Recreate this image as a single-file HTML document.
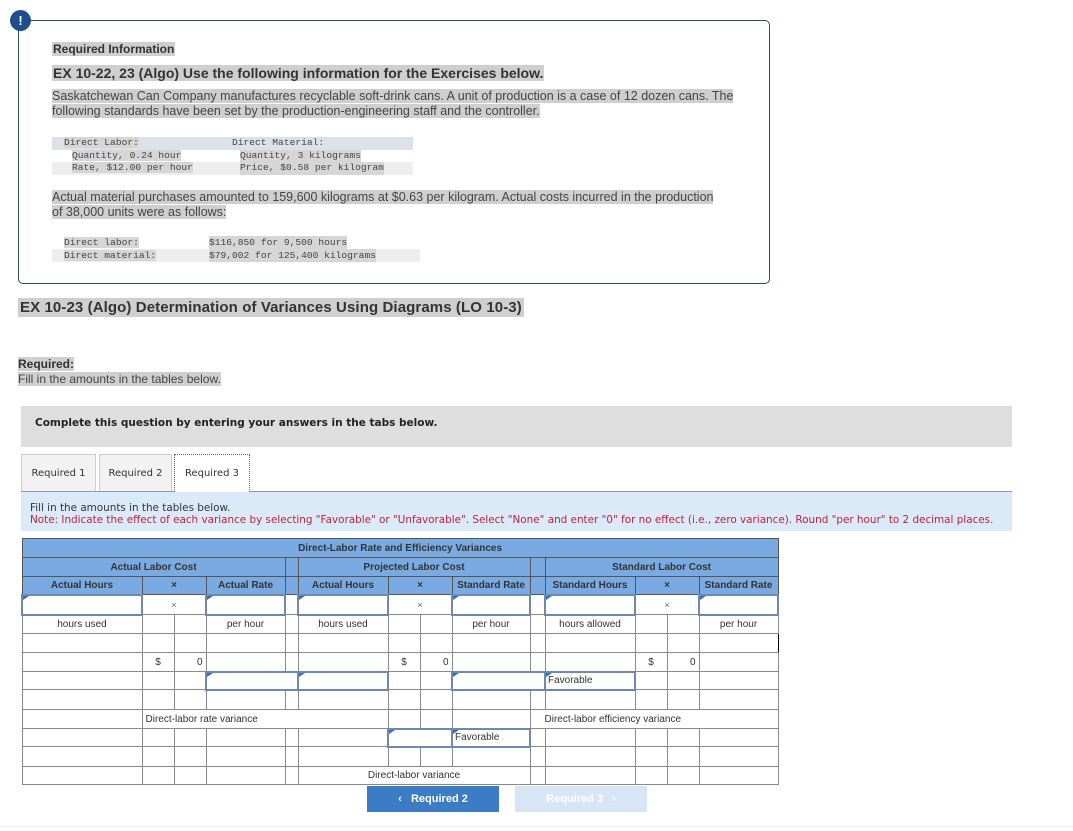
<!DOCTYPE html>
<html><head><meta charset="utf-8"><style>
*{margin:0;padding:0;box-sizing:border-box}
body{width:1073px;height:831px;background:#fff;font-family:"Liberation Sans",Arial,sans-serif;color:#333;position:relative;overflow:hidden}
.a{position:absolute;white-space:nowrap}
.hl{background:#cfcfcf}
.mono{font-family:"Liberation Mono","DejaVu Sans Mono",monospace;font-size:9.6px;color:#444}
.mono span{background:#d6d6d6}
.v{font-family:"DejaVu Sans",Verdana,sans-serif}
table{position:absolute;left:21px;top:538px;border-collapse:collapse;table-layout:fixed;width:756px;font-size:10px;color:#333}
td{border:1px solid #8a8a8a;padding:0 3px;text-align:center;overflow:hidden;white-space:nowrap}
tr.h td{background:#7aaae2;font-weight:bold;color:#333;border-color:#555}
td.in{position:relative;border:2px solid #6d89ad;background:#fff;text-align:left;padding-left:2px}
td.in:before{content:"";position:absolute;left:0;top:0;border-left:6px solid #3b6fb5;border-bottom:4px solid transparent}
td.l{text-align:left}
td.r{text-align:right}
.x{font-size:9px;color:#666}
</style></head><body>
<div class="a" style="left:10px;top:10px;width:21px;height:21px;border-radius:50%;background:#1f4e8c;color:#fff;font-weight:bold;font-size:13px;text-align:center;line-height:21px;z-index:3">!</div>
<div class="a" style="left:18px;top:20px;width:752px;height:264px;border:1px solid #2d4a6b;border-radius:5px"></div>
<div class="a hl" style="left:52px;top:42px;font-size:12px;font-weight:bold;padding:0 1px">Required Information</div>
<div class="a hl" style="left:52px;top:65px;font-size:14px;font-weight:bold;padding:0 1px">EX 10-22, 23 (Algo) Use the following information for the Exercises below.</div>
<div class="a" style="left:52px;top:89px;font-size:12.5px;line-height:14.5px;color:#444"><span class="hl">Saskatchewan Can Company manufactures recyclable soft-drink cans. A unit of production is a case of 12 dozen cans. The</span><br><span class="hl">following standards have been set by the production-engineering staff and the controller.</span></div>
<div class="a mono" style="left:52px;top:137px;line-height:12.5px">
<div style="background:#dde2ea;width:361px;padding-left:12px"><span>Direct Labor:</span><span style="background:none;position:absolute;left:180px">Direct Material:</span></div>
<div style="padding-left:20px"><span>Quantity, 0.24 hour </span><span style="position:absolute;left:188px">Quantity, 3 kilograms </span></div>
<div style="background:#eee;width:361px;padding-left:20px"><span>Rate, $12.00 per hour </span><span style="position:absolute;left:188px">Price, $0.58 per kilogram </span></div>
</div>
<div class="a" style="left:52px;top:190px;font-size:12.5px;line-height:14.5px;color:#444"><span class="hl">Actual material purchases amounted to 159,600 kilograms at $0.63 per kilogram. Actual costs incurred in the production</span><br><span class="hl">of 38,000 units were as follows:</span></div>
<div class="a mono" style="left:52px;top:236px;line-height:13px">
<div style="padding-left:12px;width:368px"><span>Direct labor: </span><span style="position:absolute;left:157px">$116,850 for 9,500 hours </span></div>
<div style="padding-left:12px;width:368px;background:#eee"><span>Direct material: </span><span style="position:absolute;left:157px">$79,002 for 125,400 kilograms </span></div>
</div>
<div class="a hl" style="left:18px;top:298px;font-size:15px;font-weight:bold;padding:1px 2px;letter-spacing:0.1px">EX 10-23 (Algo) Determination of Variances Using Diagrams (LO 10-3)</div>
<div class="a" style="left:18px;top:357px;font-size:12px;line-height:15px;color:#444"><span class="hl" style="font-weight:bold;color:#333">Required:</span><br><span class="hl">Fill in the amounts in the tables below.</span></div>
<div class="a v" style="left:21px;top:406px;width:991px;height:41px;background:#dedede;font-size:10.5px;font-weight:bold;padding:11px 0 0 14px;color:#222">Complete this question by entering your answers in the tabs below.</div>
<div class="a v" style="left:21px;top:454px;width:75px;height:37px;background:#f2f2f2;border:1px solid #ccc;border-bottom:none;font-size:10px;text-align:center;line-height:37px">Required 1</div>
<div class="a v" style="left:99px;top:454px;width:73px;height:37px;background:#f2f2f2;border:1px solid #ccc;border-bottom:none;font-size:10px;text-align:center;line-height:37px">Required 2</div>
<div class="a v" style="left:174px;top:454px;width:76px;height:38px;background:#fff;border:1px dotted #666;border-bottom:none;font-size:10px;text-align:center;line-height:37px;z-index:2">Required 3</div>
<div class="a v" style="left:21px;top:491px;width:991px;height:40px;background:#dbeaf8;border-top:1px solid #999;font-size:10.4px;line-height:12px;padding:10px 0 0 9px;color:#333">Fill in the amounts in the tables below.<br><span style="color:#c0213a">Note: Indicate the effect of each variance by selecting "Favorable" or "Unfavorable". Select "None" and enter "0" for no effect (i.e., zero variance). Round "per hour" to 2 decimal places.</span></div>
<table>
<colgroup><col style="width:120px"><col style="width:32px"><col style="width:32px"><col style="width:79px"><col style="width:13px"><col style="width:90px"><col style="width:32px"><col style="width:32px"><col style="width:78px"><col style="width:15px"><col style="width:90px"><col style="width:32px"><col style="width:32px"><col style="width:79px"></colgroup>
<tr class="h" style="height:19px"><td colspan="14">Direct-Labor Rate and Efficiency Variances</td></tr>
<tr class="h" style="height:19px"><td colspan="4">Actual Labor Cost</td><td></td><td colspan="4">Projected Labor Cost</td><td></td><td colspan="4">Standard Labor Cost</td></tr>
<tr class="h" style="height:18px"><td>Actual Hours</td><td colspan="2">×</td><td>Actual Rate</td><td></td><td>Actual Hours</td><td colspan="2">×</td><td>Standard Rate</td><td></td><td>Standard Hours</td><td colspan="2">×</td><td>Standard Rate</td></tr>
<tr style="height:20px"><td class="in"></td><td colspan="2" class="x">×</td><td class="in"></td><td></td><td class="in"></td><td colspan="2" class="x">×</td><td class="in"></td><td></td><td class="in"></td><td colspan="2" class="x">×</td><td class="in"></td></tr>
<tr style="height:19px"><td>hours used</td><td></td><td></td><td>per hour</td><td></td><td>hours used</td><td></td><td></td><td>per hour</td><td></td><td>hours allowed</td><td></td><td></td><td>per hour</td></tr>
<tr style="height:19px"><td></td><td></td><td></td><td></td><td style="border-left:1px solid #000"></td><td style="border-left:1px solid #000"></td><td></td><td></td><td></td><td style="border-left:1px solid #000"></td><td></td><td></td><td></td><td style="border-right:1px solid #000"></td></tr>
<tr style="height:19px;border-top:1px solid #000"><td></td><td>$</td><td class="r">0</td><td></td><td></td><td></td><td>$</td><td class="r">0</td><td></td><td></td><td></td><td>$</td><td class="r">0</td><td></td></tr>
<tr style="height:18px"><td></td><td></td><td style="border-left:1px solid #000"></td><td class="in" colspan="2"></td><td class="in"></td><td></td><td style="border-left:1px solid #000"></td><td class="in" colspan="2"></td><td class="in l">Favorable</td><td></td><td style="border-left:1px solid #000"></td><td></td></tr>
<tr style="height:20px"><td></td><td></td><td style="border-left:1px solid #000"></td><td></td><td></td><td></td><td></td><td style="border-left:1px solid #000"></td><td></td><td></td><td></td><td></td><td style="border-left:1px solid #000"></td><td></td></tr>
<tr style="height:19px;border-top:1px solid #000"><td></td><td colspan="5" class="l">Direct-labor rate variance</td><td></td><td></td><td></td><td colspan="5" class="l" style="padding-left:14px">Direct-labor efficiency variance</td></tr>
<tr style="height:18px"><td></td><td></td><td></td><td style="border-left:1px solid #000"></td><td></td><td></td><td class="in" colspan="2"></td><td class="in l">Favorable</td><td></td><td></td><td style="border-left:1px solid #000"></td><td></td><td></td></tr>
<tr style="height:20px"><td></td><td></td><td></td><td style="border-left:1px solid #000"></td><td></td><td></td><td></td><td></td><td></td><td></td><td></td><td style="border-left:1px solid #000"></td><td></td><td></td></tr>
<tr style="height:18px"><td></td><td></td><td></td><td style="border-top:1px solid #000"></td><td style="border-top:1px solid #000"></td><td colspan="4" style="border-top:1px solid #000">Direct-labor variance</td><td style="border-top:1px solid #000"></td><td style="border-top:1px solid #000"></td><td></td><td></td><td></td></tr>
</table>
<div class="a" style="left:367px;top:786px;width:132px;height:26px;background:#3b7cc4;color:#fff;font-size:11px;font-weight:bold;text-align:center;line-height:26px">‹&nbsp;&nbsp;&nbsp;Required 2</div>
<div class="a" style="left:515px;top:786px;width:132px;height:26px;background:#d8e5f4;color:#fff;font-size:11px;font-weight:bold;text-align:center;line-height:26px">Required 3&nbsp;&nbsp;&nbsp;›</div>
<div class="a" style="left:0;top:826px;width:1073px;height:1px;background:#eee"></div>
</body></html>
